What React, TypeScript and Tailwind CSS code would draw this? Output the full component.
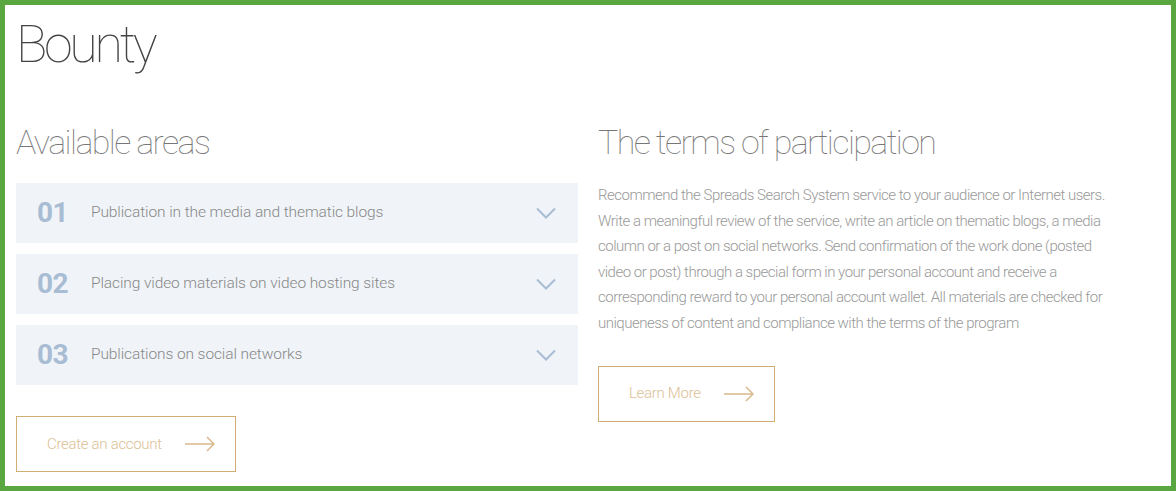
const AREAS = [
  { num: "01", title: "Publication in the media and thematic blogs" },
  { num: "02", title: "Placing video materials on video hosting sites" },
  { num: "03", title: "Publications on social networks" },
]

const TERMS = [
  "Recommend the Spreads Search System service to your audience or Internet users.",
  "Write a meaningful review of the service, write an article on thematic blogs, a media",
  "column or a post on social networks. Send confirmation of the work done (posted",
  "video or post) through a special form in your personal account and receive a",
  "corresponding reward to your personal account wallet. All materials are checked for",
  "uniqueness of content and compliance with the terms of the program",
]

function Arrow() {
  return (
    <svg width="30" height="16" viewBox="0 0 30 16" fill="none" stroke="#d8b98b" strokeWidth="1.5">
      <path d="M0 8h29" />
      <path d="M22 1l7 7-7 7" />
    </svg>
  )
}

function Chevron() {
  return (
    <svg width="20" height="12" viewBox="0 0 20 12" fill="none" stroke="#a8bcd3" strokeWidth="2">
      <path d="M1 1.5l9 9 9-9" />
    </svg>
  )
}

function OutlineButton({ label }: { label: string }) {
  return (
    <button className="h-[56px] pl-[30px] pr-[20px] border border-[#d3ae72] flex items-center gap-[23px] text-[15px] font-light text-[#dcc096] tracking-[-0.3px]">
      <span>{label}</span>
      <Arrow />
    </button>
  )
}

export default function App() {
  return (
    <div
      className="w-[1176px] h-[491px] border-[5px] border-[#5aa742] bg-white px-[11px] pt-[14px] overflow-hidden"
      style={{ fontFamily: 'Roboto, "Liberation Sans", sans-serif' }}
    >
      <h1 className="text-[52px] leading-none font-thin text-[#444] tracking-[-3.3px]">Bounty</h1>

      <div className="grid grid-cols-2 gap-5 mt-[54px]">
        {/* Available areas */}
        <div>
          <h2 className="text-[34px] leading-none font-thin text-[#777] tracking-[-1.6px]">Available areas</h2>
          <div className="mt-[24px] flex flex-col gap-[11px]">
            {AREAS.map((a) => (
              <div key={a.num} className="h-[60px] bg-[#f0f4f8] flex items-center pl-[21px] pr-[22px]">
                <span className="text-[28px] font-bold text-[#a8bcd3] w-[54px] tracking-[-0.5px]">{a.num}</span>
                <span className="flex-1 text-[15.5px] font-light text-[#888] tracking-[-0.1px]">{a.title}</span>
                <Chevron />
              </div>
            ))}
          </div>
          <div className="mt-[31px]">
            <OutlineButton label="Create an account" />
          </div>
        </div>

        {/* Terms */}
        <div>
          <h2 className="text-[34px] leading-none font-thin text-[#777] tracking-[-1.6px]">The terms of participation</h2>
          <p className="mt-[24px] text-[15px] leading-[25.6px] font-light text-[#999] tracking-[-0.5px] whitespace-nowrap">
            {TERMS.map((line, i) => (
              <span key={i}>
                {line}
                {i < TERMS.length - 1 && <br />}
              </span>
            ))}
          </p>
          <div className="mt-[29px]">
            <OutlineButton label="Learn More" />
          </div>
        </div>
      </div>
    </div>
  )
}
